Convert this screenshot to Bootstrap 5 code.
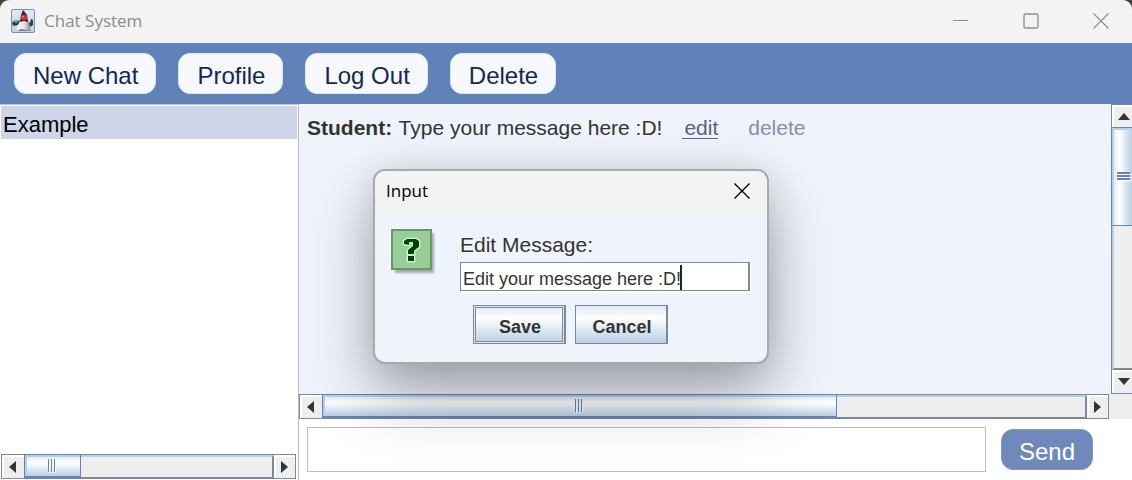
<!DOCTYPE html>
<html lang="en">
<head>
<meta charset="utf-8">
<meta name="viewport" content="width=device-width, initial-scale=1">
<title>Chat System</title>
<link href="https://cdn.jsdelivr.net/npm/bootstrap@5.3.0/dist/css/bootstrap.min.css" rel="stylesheet">
<style>
  :root { --steel: #7a8a99; --blue: #6382bf; --pale: #b8cfe5; --panel: #eff3fb; --grey: #eee; }
  body { font-family: "Liberation Sans", Arial, sans-serif; color: #333; background: #fff; }
  button { font-family: inherit; }
  .ui-title { font-family: "Open Sans", "Segoe UI", sans-serif; font-size: 17px; line-height: 24px; }

  .titlebar { height: 43px; background: #f3f3f3; color: #8c8c8c; border-radius: 9px 9px 0 0; padding: 0 23px 2px 11px; gap: 9px; }
  .corners { background: #444; }
  .win-btn { border: 0; background: none; padding: 0; line-height: 0; color: #8f8f8f; }
  .win-group { gap: 54px; }

  .toolbar { background: #6182b8; padding: 10px 14px; gap: 22px; }
  .pill { border: 1px solid transparent; border-radius: 12px; font-size: 24px; line-height: 28px; padding: 8px 17px 3px; height: 41px; }
  .pill-light { background: #f6f8fc; color: #142850; border-color: #dfe6f2; padding-left: 18px; }
  .pill-send { background: #6f8aba; color: #fff; border-color: #7f98c3; }

  .chat-body { min-height: 0; }
  .sidebar { width: 299px; border-right: 1px solid #bcbcbc; border-top: 1px solid #c4c4c4; background: #fff; padding: 1px 1px 0; }
  .chat-item { background: #ccd6e8; color: #000; font-size: 22px; line-height: 26px; padding: 6px 2px 1px; }
  .side-scroll { margin: 0 1px 1px 0; }

  .messages { background: var(--panel); }
  .message { font-size: 21px; line-height: 24px; padding: 12px 8px; color: #333; }
  .message b { margin-right: 1px; }
  .message a { color: #576379; }
  .message .edit { margin-left: 20px; text-decoration: none; border-bottom: 1px solid #576379; padding-left: 2px; line-height: 20px; }
  .message .delete { margin-left: 30px; color: #8290ae; text-decoration: none; }

  /* Metal-style scroll bars */
  .hbar { height: 25px; border: 1px solid var(--steel); border-right: 0; background: #fff; }
  .vbar { width: 21px; border-left: 1px solid var(--steel); border-top: 1px solid var(--steel); background: #fff; }
  .arrow { border: 0; padding: 0; background: var(--grey); line-height: 0; color: #333; box-shadow: inset 2px 2px #fff; }
  .hbar .arrow { width: 22px; }
  .hbar .arrow:last-child { border-right: 1px solid var(--steel); }
  .vbar .arrow { height: 22px; padding-left: 3px; }
  .vbar .arrow:last-child { height: 24px; border-bottom: 1px solid var(--steel); }
  .track-h { background: var(--grey); border-top: 2px solid var(--pale); border-right: 2px solid var(--steel); border-bottom: 1px solid var(--steel); }
  .track-v { background: var(--grey); border-left: 2px solid var(--pale); border-bottom: 2px solid var(--steel); }
  .thumb-h { border: 1px solid var(--blue); border-bottom-width: 2px; margin: -3px 0 -1px; box-shadow: inset 2px 2px var(--pale); background: linear-gradient(#dde8f3, #fff 38%, #b8cfe5); }
  .thumb-v { border: 1px solid var(--blue); border-right: 0; margin-left: -3px; box-shadow: inset 2px 2px var(--pale); background: linear-gradient(90deg, #dde8f3, #fff 38%, #b8cfe5); }
  .side-thumb { width: 57px; }
  .main-thumb { width: 67.5%; }
  .msg-thumb { height: 41%; }
  .scroll-corner { width: 23px; background: var(--grey); }

  .composer { padding: 8px 39px 8px 8px; gap: 15px; background: #fff; }
  .compose-box { height: 45px; border: 1px solid #bfbfbf; padding: 0 8px; font-size: 21px; min-width: 0; background: #fff; }

  .dialog-box { top: 169px; left: 50%; margin-left: -193px; width: 396px; border: 2px solid #a6a9ae; border-radius: 12px; background: var(--panel); box-shadow: 0 32px 64px rgba(0,0,0,.3), 0 4px 36px rgba(0,0,0,.12); }
  .dialog-head { background: #f3f3f3; height: 43px; padding: 0 17px 3px 11px; color: #000; border-radius: 10px 10px 0 0; }
  .dialog-body { padding: 15px 17px 18px 16px; gap: 23px; }
  .edit-label { font-size: 21px; line-height: 24px; margin-bottom: 5px; padding-top: 4px; }
  .edit-field { height: 29px; border: 1px solid var(--steel); border-right-width: 2px; box-shadow: 1px 2px #fff; padding: 5px 2px 0; font-size: 18px; line-height: 22px; color: #333; background: #fff; outline: 0; width: 100%; }
  .caret { left: 220px; top: 3px; width: 2px; height: 25px; background: #222; }
  .metal-btn { width: 93px; height: 39px; border: 1px solid var(--steel); border-right-width: 2px; font-size: 18px; line-height: 20px; font-weight: 700; color: #333; padding: 5px 0 0 2px; background: linear-gradient(#dde8f3, #fff 32%, #b8cfe5); }
  .metal-default { box-shadow: inset 0 0 0 1px #dbe6f2, inset -1px 0 0 1px var(--steel), inset 0 0 0 2px var(--steel); }
  .button-row { padding: 14px 0 0 13px; gap: 9px; }
</style>
</head>
<body class="vh-100 d-flex flex-column overflow-hidden position-relative">
  <header class="corners">
    <div class="titlebar d-flex align-items-center">
      <svg width="24" height="24" viewBox="0 0 24 24" aria-hidden="true">
        <defs>
          <linearGradient id="sky" x2="0" y2="1"><stop stop-color="#e2e9f1"/><stop offset="1" stop-color="#c3cedd"/></linearGradient>
          <linearGradient id="belly"><stop stop-color="#fff"/><stop offset=".6" stop-color="#e4e4e2"/><stop offset="1" stop-color="#8d8f90"/></linearGradient>
        </defs>
        <rect x=".5" y=".5" width="23" height="23" rx="1.5" fill="url(#sky)" stroke="#7395b4"/>
        <path d="M1 15 2 12l4-1 4 1-1 5-3-1-3 1zM16 12l3 2 1-4 2 1v5l-3 2-3-2z" fill="#353b42"/>
        <path d="M2 12.500 6 11l2 1-3 2z" fill="#6fa9da"/>
        <path d="M5 20h14l1 2H5z" fill="#78828c"/>
        <path d="M9 12 7 16l-2 5 1 1 4-2 6 1 3 1v-5l-2-6z" fill="url(#belly)"/>
        <path d="M12 1 10 6l-1 7 4-1 4 1-1-7-3-4z" fill="#2b2e31"/>
        <ellipse cx="13" cy="8.500" rx="3.200" ry="2.800" fill="#e02a2a"/>
        <circle cx="12" cy="7.500" r="1" fill="#f47a72"/>
      </svg>
      <span class="ui-title">Chat System</span>
      <div class="win-group d-flex align-items-center ms-auto">
        <button class="win-btn" aria-label="Minimize"><svg width="16" height="16"><path d="M0 7.500h15" stroke="currentColor"/></svg></button>
        <button class="win-btn" aria-label="Maximize"><svg width="16" height="16"><rect x="1" y="1" width="14" height="14" rx="1.500" fill="none" stroke="currentColor" stroke-width="1.300"/></svg></button>
        <button class="win-btn" aria-label="Close"><svg width="16" height="16"><path d="m.5.5 15 15m0-15-15 15" stroke="currentColor" stroke-width="1.200"/></svg></button>
      </div>
    </div>
  </header>

  <nav class="toolbar d-flex" aria-label="Chat actions">
    <button class="pill pill-light">New Chat</button>
    <button class="pill pill-light">Profile</button>
    <button class="pill pill-light">Log Out</button>
    <button class="pill pill-light">Delete</button>
  </nav>

  <div class="chat-body d-flex flex-grow-1">
    <aside class="sidebar d-flex flex-column flex-shrink-0">
      <div class="chat-item">Example</div>
      <div class="side-scroll hbar d-flex mt-auto">
        <button class="arrow" aria-label="Scroll left"><svg width="8" height="12"><path d="M7 0v12L0 6z" fill="currentColor"/></svg></button>
        <div class="track-h flex-grow-1 d-flex">
          <div class="thumb-h side-thumb d-flex align-items-center justify-content-center"><svg width="9" height="14"><path d="M1.500 1v13m3-13v13m3-13v13" stroke="#fff"/><path d="M.5 0v13m3-13v13m3-13v13" stroke="#6382bf"/></svg></div>
        </div>
        <button class="arrow" aria-label="Scroll right"><svg width="8" height="12"><path d="M0 0v12l7-6z" fill="currentColor"/></svg></button>
      </div>
    </aside>

    <main class="d-flex flex-column flex-grow-1">
      <div class="messages d-flex flex-grow-1">
        <div class="message flex-grow-1">
          <b>Student:</b> Type your message here :D!<a class="edit d-inline-block" href="#">edit</a><a class="delete" href="#">delete</a>
        </div>
        <div class="vbar d-flex flex-column flex-shrink-0">
          <button class="arrow" aria-label="Scroll up"><svg width="12" height="7"><path d="M0 7h12L6 0z" fill="currentColor"/></svg></button>
          <div class="track-v flex-grow-1">
            <div class="thumb-v msg-thumb d-flex align-items-center justify-content-end"><svg width="15" height="9"><path d="M1 2.500h14m-14 3h14m-14 3h14" stroke="#fff"/><path d="M0 1h13M0 4h13M0 7h13" stroke="#6382bf" stroke-width="2"/></svg></div>
          </div>
          <button class="arrow" aria-label="Scroll down"><svg width="12" height="7"><path d="M0 0h12L6 7z" fill="currentColor"/></svg></button>
        </div>
      </div>
      <div class="d-flex">
        <div class="hbar d-flex flex-grow-1">
          <button class="arrow" aria-label="Scroll left"><svg width="8" height="12"><path d="M7 0v12L0 6z" fill="currentColor"/></svg></button>
          <div class="track-h flex-grow-1 d-flex">
            <div class="thumb-h main-thumb d-flex align-items-center justify-content-center"><svg width="9" height="14"><path d="M1.500 1v13m3-13v13m3-13v13" stroke="#fff"/><path d="M.5 0v13m3-13v13m3-13v13" stroke="#6382bf"/></svg></div>
          </div>
          <button class="arrow" aria-label="Scroll right"><svg width="8" height="12"><path d="M0 0v12l7-6z" fill="currentColor"/></svg></button>
        </div>
        <div class="scroll-corner"></div>
      </div>
      <form class="composer d-flex align-items-center">
        <input class="compose-box flex-grow-1" type="text" aria-label="Message">
        <button class="pill pill-send" type="button">Send</button>
      </form>
    </main>
  </div>

  <section class="dialog-box position-absolute" role="dialog" aria-labelledby="dialog-title">
    <div class="dialog-head d-flex align-items-center justify-content-between">
      <span class="ui-title" id="dialog-title">Input</span>
      <button class="win-btn text-black" aria-label="Close dialog"><svg width="16" height="16"><path d="m.5.5 15 15m0-15-15 15" stroke="currentColor" stroke-width="1.400"/></svg></button>
    </div>
    <div class="dialog-body d-flex">
      <svg class="flex-shrink-0" width="46" height="48" viewBox="0 0 46 48" aria-hidden="true">
        <defs><filter id="soft"><feGaussianBlur stdDeviation="1.3"/></filter></defs>
        <rect x="4" y="4" width="39" height="40" fill="#000" opacity=".3" filter="url(#soft)"/>
        <rect x="1" y="1" width="39" height="39" fill="#9c9" stroke="#696" stroke-width="2"/>
        <path d="M13 15v-3l3-2h9l3 2v6l-3 2-2 2v3h-6v-4l5-4v-4h-4v3zM17 27h6v5h-6z" fill="#040" stroke="#cfc" stroke-width="2.500" paint-order="stroke"/>
      </svg>
      <div class="flex-grow-1">
        <label class="edit-label d-block" for="edit-message">Edit Message:</label>
        <div class="position-relative">
          <input class="edit-field d-block rounded-0" id="edit-message" type="text" value="Edit your message here :D!">
          <span class="caret position-absolute"></span>
        </div>
        <div class="button-row d-flex">
          <button class="metal-btn metal-default">Save</button>
          <button class="metal-btn">Cancel</button>
        </div>
      </div>
    </div>
  </section>
<script src="https://cdn.jsdelivr.net/npm/bootstrap@5.3.0/dist/js/bootstrap.bundle.min.js"></script>
</body>
</html>
